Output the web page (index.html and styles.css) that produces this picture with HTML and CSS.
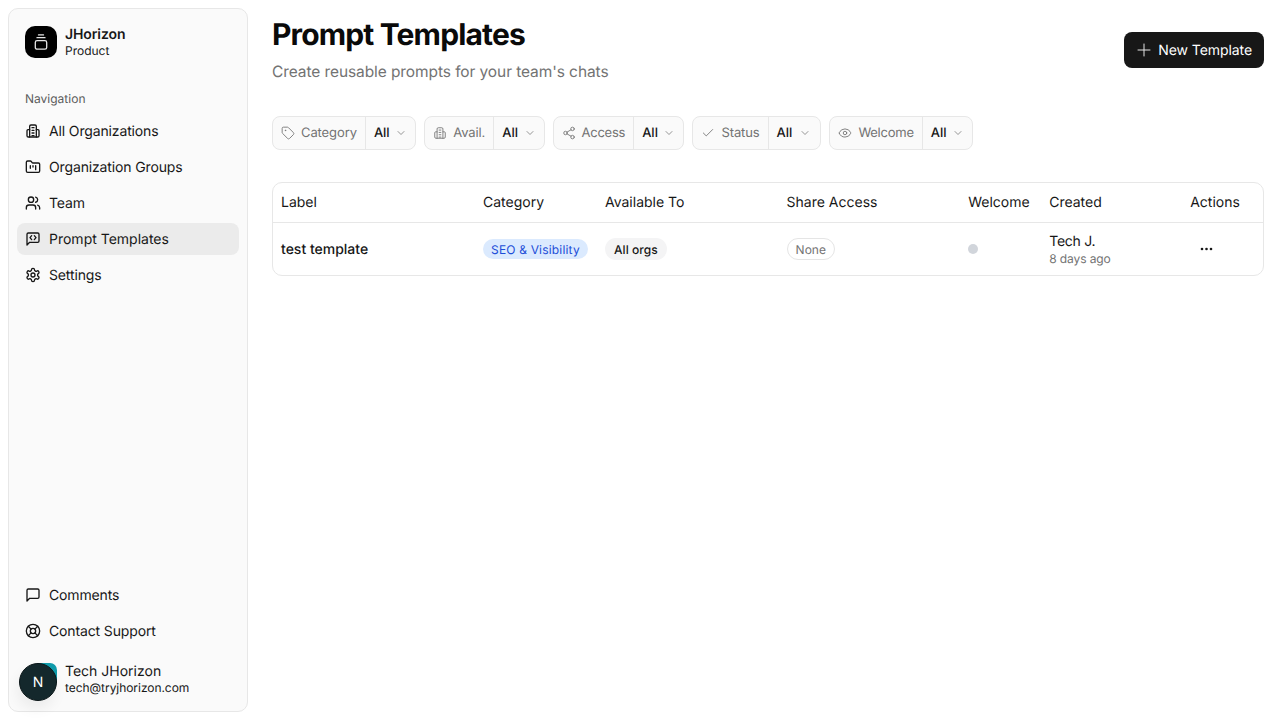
FILE: index.html
```html
<!DOCTYPE html>
<html lang="en">
<head>
<meta charset="utf-8">
<title>Prompt Templates</title>
<link rel="stylesheet" href="styles.css">
</head>
<body>
<div class="app">
  <aside class="sidebar">
    <div class="brand">
      <div class="brand-logo">
        <svg width="16" height="16" viewBox="0 0 16 16" fill="none" stroke="#e5e5e5" stroke-width="1.3" stroke-linecap="round" stroke-linejoin="round"><path d="M5.500 .9h5"/><path d="M4 3.700h8"/><rect x="2.300" y="6.700" width="11.400" height="8.500" rx="1.800"/></svg>
      </div>
      <div class="brand-text"><div class="brand-name">JHorizon</div><div class="brand-sub">Product</div></div>
    </div>
    <div class="nav-label">Navigation</div>
    <nav class="nav">
      <a class="nav-item"><svg class="ico" viewBox="0 0 24 24"><path d="M7 21V5a2 2 0 0 1 2-2h6a2 2 0 0 1 2 2v16"/><path d="M7 10H4.500A1.500 1.500 0 0 0 3 11.500V19a2 2 0 0 0 2 2h14a2 2 0 0 0 2-2v-7.500A1.500 1.500 0 0 0 19.500 10H17"/><path d="M10.500 7h3M10.500 11h3M10.500 15h3M10.500 19h3"/></svg>All Organizations</a>
      <a class="nav-item"><svg class="ico" viewBox="0 0 24 24"><path d="M4 20h16a2 2 0 0 0 2-2V8a2 2 0 0 0-2-2h-7.900a2 2 0 0 1-1.700-.9l-.8-1.200A2 2 0 0 0 7.900 3H4a2 2 0 0 0-2 2v13a2 2 0 0 0 2 2Z"/><path d="M8 10v4M12 10v2M16 10v6"/></svg>Organization Groups</a>
      <a class="nav-item"><svg class="ico" viewBox="0 0 24 24"><path d="M16 21v-2a4 4 0 0 0-4-4H6a4 4 0 0 0-4 4v2"/><circle cx="9" cy="7" r="4"/><path d="M22 21v-2a4 4 0 0 0-3-3.870"/><path d="M16 3.130a4 4 0 0 1 0 7.750"/></svg>Team</a>
      <a class="nav-item active"><svg class="ico" viewBox="0 0 24 24"><path d="M21 15a2 2 0 0 1-2 2H7l-4 4V5a2 2 0 0 1 2-2h14a2 2 0 0 1 2 2z"/><path d="m10 7-2.500 3 2.500 3"/><path d="m14 7 2.500 3-2.500 3"/></svg>Prompt Templates</a>
      <a class="nav-item"><svg class="ico" viewBox="0 0 24 24"><path d="M12.220 2h-.440a2 2 0 0 0-2 2v.180a2 2 0 0 1-1 1.730l-.430.250a2 2 0 0 1-2 0l-.150-.080a2 2 0 0 0-2.730.730l-.220.380a2 2 0 0 0 .730 2.730l.150.100a2 2 0 0 1 1 1.720v.510a2 2 0 0 1-1 1.740l-.150.090a2 2 0 0 0-.730 2.730l.220.380a2 2 0 0 0 2.730.730l.150-.080a2 2 0 0 1 2 0l.430.250a2 2 0 0 1 1 1.730V20a2 2 0 0 0 2 2h.440a2 2 0 0 0 2-2v-.180a2 2 0 0 1 1-1.730l.430-.250a2 2 0 0 1 2 0l.150.080a2 2 0 0 0 2.730-.730l.220-.390a2 2 0 0 0-.730-2.730l-.150-.080a2 2 0 0 1-1-1.740v-.500a2 2 0 0 1 1-1.740l.150-.090a2 2 0 0 0 .730-2.730l-.220-.380a2 2 0 0 0-2.730-.730l-.150.080a2 2 0 0 1-2 0l-.430-.250a2 2 0 0 1-1-1.730V4a2 2 0 0 0-2-2z"/><circle cx="12" cy="12" r="3"/></svg>Settings</a>
    </nav>
    <div class="spacer"></div>
    <nav class="nav">
      <a class="nav-item"><svg class="ico" viewBox="0 0 24 24"><path d="M21 15a2 2 0 0 1-2 2H7l-4 4V5a2 2 0 0 1 2-2h14a2 2 0 0 1 2 2z"/></svg>Comments</a>
      <a class="nav-item"><svg class="ico" viewBox="0 0 24 24"><circle cx="12" cy="12" r="10"/><circle cx="12" cy="12" r="4"/><path d="m4.930 4.930 4.240 4.240M14.830 9.170l4.240-4.240M14.830 14.830l4.240 4.240M9.170 14.830l-4.240 4.240"/></svg>Contact Support</a>
    </nav>
    <div class="user">
      <div class="avatar-wrap"><div class="avatar-back"></div><div class="avatar">N</div></div>
      <div class="user-text"><div class="user-name">Tech JHorizon</div><div class="user-mail">tech@tryjhorizon.com</div></div>
    </div>
  </aside>
  <main class="main">
    <header class="head">
      <div><h1 class="title">Prompt Templates</h1><p class="subtitle">Create reusable prompts for your team's chats</p></div>
      <button class="primary"><svg class="ico-plus" viewBox="0 0 24 24"><path d="M3 12h18M12 3v18"/></svg>New Template</button>
    </header>
    <div class="filters">
      <div class="filter"><div class="f-label"><svg class="ico-f" viewBox="0 0 24 24"><path d="M12.590 2.590A2 2 0 0 0 11.170 2H4a2 2 0 0 0-2 2v7.170a2 2 0 0 0 .590 1.420l8.700 8.700a2.400 2.400 0 0 0 3.420 0l6.580-6.580a2.400 2.400 0 0 0 0-3.420z"/><circle cx="7.500" cy="7.500" r=".6"/></svg>Category</div><div class="f-val">All<svg class="chev" viewBox="0 0 24 24"><path d="m6 9 6 6 6-6"/></svg></div></div>
      <div class="filter"><div class="f-label"><svg class="ico-f" viewBox="0 0 24 24"><path d="M7 21V5a2 2 0 0 1 2-2h6a2 2 0 0 1 2 2v16"/><path d="M7 10H4.500A1.500 1.500 0 0 0 3 11.500V19a2 2 0 0 0 2 2h14a2 2 0 0 0 2-2v-7.500A1.500 1.500 0 0 0 19.500 10H17"/><path d="M10.500 7h3M10.500 11h3M10.500 15h3M10.500 19h3"/></svg>Avail.</div><div class="f-val">All<svg class="chev" viewBox="0 0 24 24"><path d="m6 9 6 6 6-6"/></svg></div></div>
      <div class="filter f-tight"><div class="f-label"><svg class="ico-f" viewBox="0 0 24 24"><circle cx="18" cy="5" r="3"/><circle cx="6" cy="12" r="3"/><circle cx="18" cy="19" r="3"/><path d="m8.590 13.510 6.830 3.980M15.410 6.510l-6.820 3.980"/></svg>Access</div><div class="f-val">All<svg class="chev" viewBox="0 0 24 24"><path d="m6 9 6 6 6-6"/></svg></div></div>
      <div class="filter f-status"><div class="f-label"><svg class="ico-f" viewBox="0 0 24 24"><path d="M20 6 9 17l-5-5"/></svg>Status</div><div class="f-val">All<svg class="chev" viewBox="0 0 24 24"><path d="m6 9 6 6 6-6"/></svg></div></div>
      <div class="filter f-tight"><div class="f-label"><svg class="ico-f" viewBox="0 0 24 24"><path d="M2.060 12.350a1 1 0 0 1 0-.700 10.750 10.750 0 0 1 19.880 0 1 1 0 0 1 0 .700 10.750 10.750 0 0 1-19.880 0"/><circle cx="12" cy="12" r="3"/></svg>Welcome</div><div class="f-val">All<svg class="chev" viewBox="0 0 24 24"><path d="m6 9 6 6 6-6"/></svg></div></div>
    </div>
    <div class="table">
      <div class="row row-head">
        <div>Label</div><div>Category</div><div>Available To</div><div>Share Access</div><div>Welcome</div><div>Created</div><div>Actions</div>
      </div>
      <div class="row row-body">
        <div class="cell-label">test template</div>
        <div><span class="pill pill-blue">SEO &amp; Visibility</span></div>
        <div><span class="pill pill-gray">All orgs</span></div>
        <div><span class="pill pill-out">None</span></div>
        <div><span class="dot"></span></div>
        <div class="created"><div class="by">Tech J.</div><div class="when">8 days ago</div></div>
        <div class="actions"><svg class="dots" viewBox="0 0 13 4"><circle cx="2" cy="2" r="1.300"/><circle cx="6.500" cy="2" r="1.300"/><circle cx="11" cy="2" r="1.300"/></svg></div>
      </div>
    </div>
  </main>
</div>
</body>
</html>
```
FILE: styles.css
```css
* { box-sizing: border-box; }
html, body { margin: 0; height: 100%; }
body { font-family: Inter, "Liberation Sans", sans-serif; color: #171717; background: #fff; overflow: hidden; text-rendering: geometricPrecision; }
.app { display: flex; height: 720px; padding: 8px 16px 8px 8px; gap: 24px; }
.sidebar { width: 240px; flex: none; height: 704px; background: #fafafa; border: 1px solid #e7e7e7; border-radius: 10px; display: flex; flex-direction: column; padding: 8px; }
.brand { display: flex; align-items: center; gap: 8px; padding: 8px; height: 48px; margin-top: 1px; }
.brand-logo { width: 32px; height: 32px; background: #000; border-radius: 10px; display: flex; align-items: center; justify-content: center; flex: none; }
.brand-name { font-size: 14px; line-height: 17px; font-weight: 600; letter-spacing: -0.1px; }
.brand-sub { font-size: 12px; line-height: 16px; }
.nav-label { font-size: 12px; line-height: 16px; color: #5c5c5c; padding: 0 8px; margin-top: 25px; margin-bottom: 8px; }
.nav { display: flex; flex-direction: column; gap: 4px; }
.nav-item { display: flex; align-items: center; gap: 8px; height: 32px; padding: 0 8px; border-radius: 8px; font-size: 14px; letter-spacing: -0.14px; color: #171717; }
.nav-item.active { background: #ebebeb; letter-spacing: 0; }
.ico { width: 16px; height: 16px; fill: none; stroke: #171717; stroke-width: 2; stroke-linecap: round; stroke-linejoin: round; flex: none; }
.spacer { flex: 1; }
.user { display: flex; align-items: flex-end; gap: 8px; height: 56px; padding: 0 8px 2px 2px; }
.avatar-wrap { width: 38px; height: 38px; position: relative; flex: none; border-radius: 50%; box-shadow: -2px 8px 14px rgba(0,0,0,.06); }
.avatar-back { position: absolute; right: 0; top: 0; width: 20px; height: 20px; border-radius: 0 7px 0 0; background: #0e9aaa; }
.avatar { position: absolute; left: 0; top: 0; width: 38px; height: 38px; border-radius: 50%; background: #14282c; color: #fff; border: 1px solid #0b1618; font-size: 14px; display: flex; align-items: center; justify-content: center; }
.user-text { margin-bottom: 5px; }
.user-name { font-size: 14px; line-height: 17px; font-weight: 400; }
.user-mail { font-size: 12px; line-height: 16px; letter-spacing: -0.05px; }
.main { flex: 1; min-width: 0; }
.head { display: flex; justify-content: space-between; align-items: flex-start; }
.title { margin: 7px 0 0; font-size: 30px; line-height: 40px; font-weight: 700; letter-spacing: -0.85px; color: #0a0a0a; }
.subtitle { margin: 5px 0 0; font-size: 15.500px; line-height: 24px; letter-spacing: -0.09px; color: #737373; }
.primary { margin-top: 24px; height: 36px; padding: 0 12px; display: flex; align-items: center; gap: 6px; background: #171717; color: #fff; border: 0; border-radius: 8px; font: 400 14px Inter, sans-serif; letter-spacing: -0.08px; text-rendering: geometricPrecision; }
.ico-plus { width: 16px; height: 16px; fill: none; stroke: #e5e5e5; stroke-width: 1.500; stroke-linecap: round; }
.filters { display: flex; gap: 8px; margin-top: 32px; }
.filter { display: flex; height: 34px; border: 1px solid #e7e7e7; border-radius: 8px; background: #fafafa; font-size: 13px; }
.f-label { display: flex; align-items: center; gap: 6px; padding: 0 8px; color: #737373; border-right: 1px solid #e7e7e7; letter-spacing: -0.1px; }
.f-tight .f-label { letter-spacing: -0.25px; }
.f-val { display: flex; align-items: center; gap: 5.500px; padding: 0 8px; color: #171717; font-weight: 500; }
.f-status .f-val { gap: 7px; padding-right: 9px; }
.ico-f { width: 14px; height: 14px; fill: none; stroke: #737373; stroke-width: 1.500; stroke-linecap: round; stroke-linejoin: round; }
.chev { width: 12px; height: 12px; fill: none; stroke: #737373; stroke-width: 1.500; stroke-linecap: round; stroke-linejoin: round; }
.table { margin-top: 32px; border: 1px solid #e7e7e7; border-radius: 10px; }
.row { display: grid; grid-template-columns: 202px 122px 181.600px 181.600px 81px 141px 1fr; padding: 0 8px; align-items: center; }
.row-head { height: 40px; border-bottom: 1px solid #e7e7e7; font-size: 14px; font-weight: 400; }
.row-body { height: 52px; font-size: 14px; }
.cell-label { font-weight: 500; }
.pill { display: inline-flex; align-items: center; border-radius: 999px; font-size: 12px; height: 20px; padding: 0 8px; }
.pill-blue { background: #dbeafe; color: #1d4ed8; letter-spacing: 0.18px; }
.pill-gray { background: #f4f4f5; color: #171717; height: 22px; padding: 0 9px; font-weight: 500; letter-spacing: 0.05px; }
.pill-out { background: #fff; color: #737373; border: 1px solid #e5e5e5; height: 22px; }
.dot { display: block; width: 10px; height: 10px; border-radius: 50%; background: #d1d5db; }
.created { padding-top: 2px; }
.by { font-size: 14px; line-height: 18px; letter-spacing: -0.25px; }
.when { font-size: 12px; line-height: 16px; color: #737373; letter-spacing: -0.1px; }
.actions { padding-left: 9.500px; }
.dots { display: block; width: 13px; height: 4px; fill: #171717; }
```
